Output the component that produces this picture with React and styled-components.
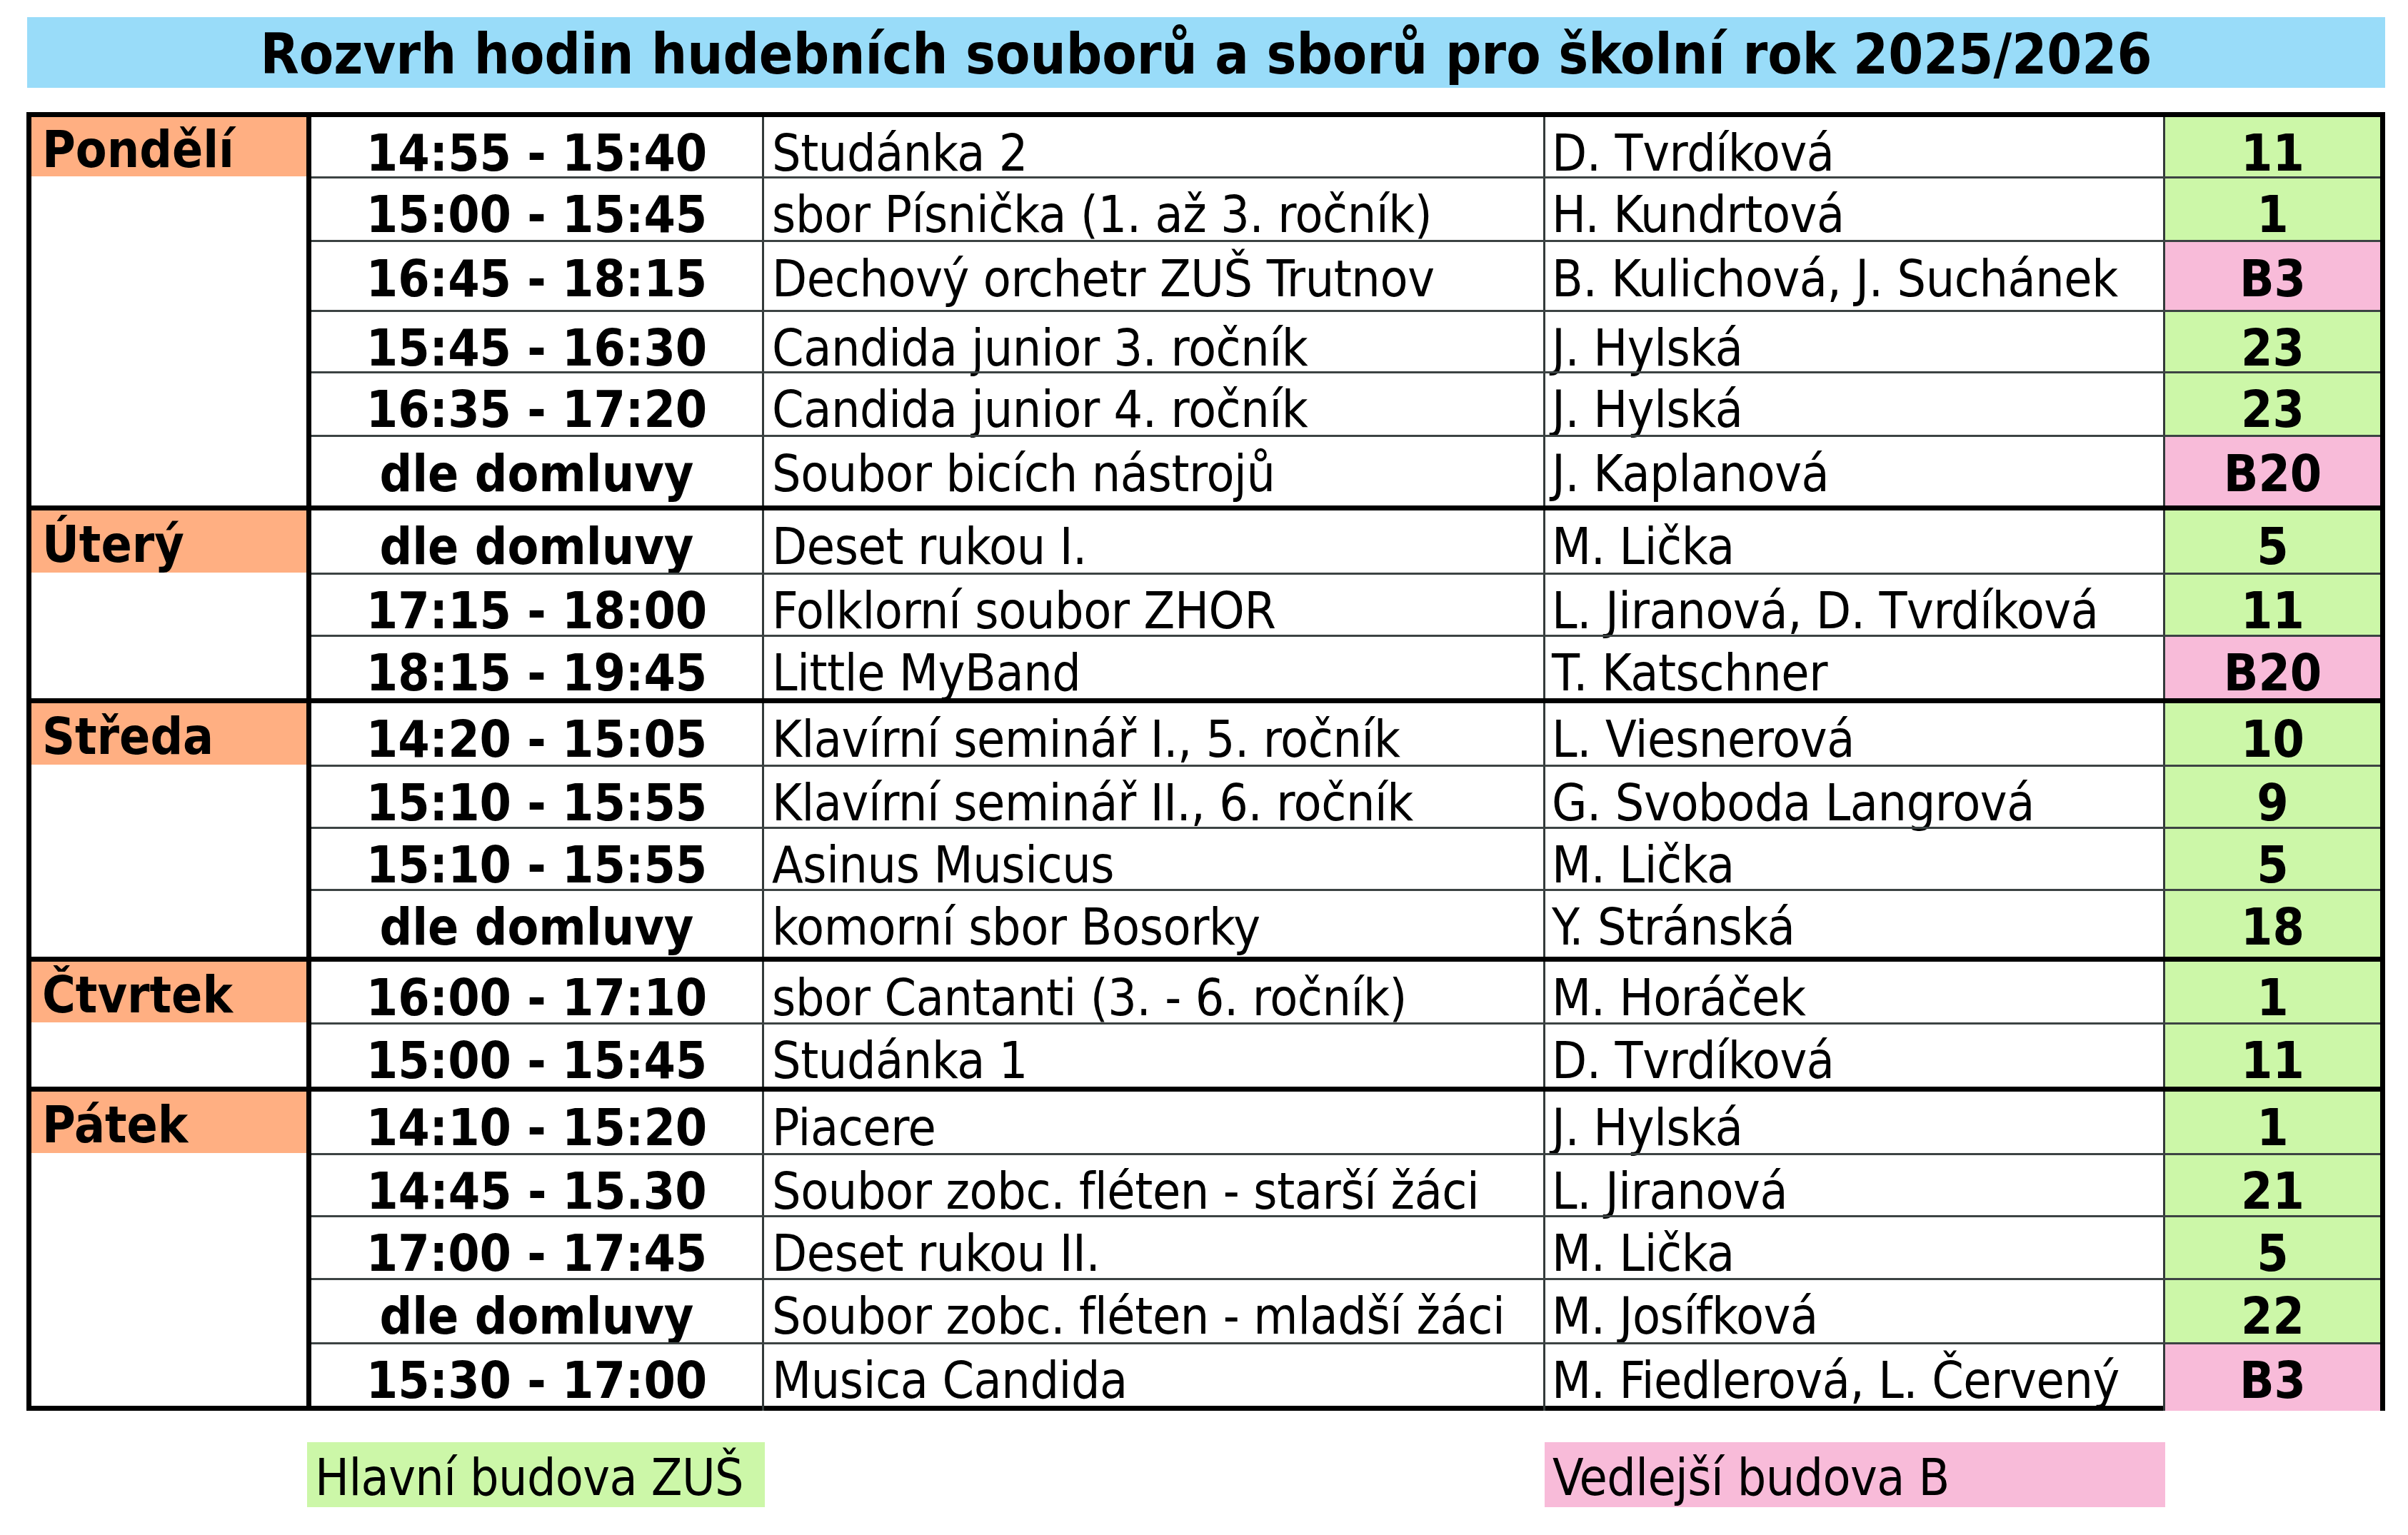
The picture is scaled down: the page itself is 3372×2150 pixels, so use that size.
import React from 'react';
import styled, { createGlobalStyle } from 'styled-components';

const GlobalStyle = createGlobalStyle`
  html, body {
    margin: 0;
    padding: 0;
    background: #ffffff;
  }
  body {
    font-family: 'DejaVu Sans Condensed', 'DejaVu Sans', sans-serif;
    font-stretch: condensed;
    color: #000000;
  }
`;

// barvy podle budov
const ROOM_BG = {
  main: '#ccf7a8',
  side: '#f8bbd9',
};

// h = vzdálenost mezi středy čar (jako v tabulce z Excelu)
const schedule = [
  {
    day: 'Pondělí',
    rows: [
      { h: 88, time: '14:55 - 15:40', name: 'Studánka 2', teacher: 'D. Tvrdíková', room: '11', b: 'main' },
      { h: 89, time: '15:00 - 15:45', name: 'sbor Písnička (1. až 3. ročník)', teacher: 'H. Kundrtová', room: '1', b: 'main' },
      { h: 98, time: '16:45 - 18:15', name: 'Dechový orchetr ZUŠ Trutnov', teacher: 'B. Kulichová, J. Suchánek', room: 'B3', b: 'side' },
      { h: 86, time: '15:45 - 16:30', name: 'Candida junior 3. ročník', teacher: 'J. Hylská', room: '23', b: 'main' },
      { h: 89, time: '16:35 - 17:20', name: 'Candida junior 4. ročník', teacher: 'J. Hylská', room: '23', b: 'main' },
      { h: 101, time: 'dle domluvy', name: 'Soubor bicích nástrojů', teacher: 'J. Kaplanová', room: 'B20', b: 'side' },
    ],
  },
  {
    day: 'Úterý',
    rows: [
      { h: 92, time: 'dle domluvy', name: 'Deset rukou I.', teacher: 'M. Lička', room: '5', b: 'main' },
      { h: 87, time: '17:15 - 18:00', name: 'Folklorní soubor ZHOR', teacher: 'L. Jiranová, D. Tvrdíková', room: '11', b: 'main' },
      { h: 91, time: '18:15 - 19:45', name: 'Little MyBand', teacher: 'T. Katschner', room: 'B20', b: 'side' },
    ],
  },
  {
    day: 'Středa',
    rows: [
      { h: 91, time: '14:20 - 15:05', name: 'Klavírní seminář I., 5. ročník', teacher: 'L. Viesnerová', room: '10', b: 'main' },
      { h: 87, time: '15:10 - 15:55', name: 'Klavírní seminář II., 6. ročník', teacher: 'G. Svoboda Langrová', room: '9', b: 'main' },
      { h: 87, time: '15:10 - 15:55', name: 'Asinus Musicus', teacher: 'M. Lička', room: '5', b: 'main' },
      { h: 97, time: 'dle domluvy', name: 'komorní sbor Bosorky', teacher: 'Y. Stránská', room: '18', b: 'main' },
    ],
  },
  {
    day: 'Čtvrtek',
    rows: [
      { h: 90, time: '16:00 - 17:10', name: 'sbor Cantanti (3. - 6. ročník)', teacher: 'M. Horáček', room: '1', b: 'main' },
      { h: 92, time: '15:00 - 15:45', name: 'Studánka 1', teacher: 'D. Tvrdíková', room: '11', b: 'main' },
    ],
  },
  {
    day: 'Pátek',
    rows: [
      { h: 91, time: '14:10 - 15:20', name: 'Piacere', teacher: 'J. Hylská', room: '1', b: 'main' },
      { h: 87, time: '14:45 - 15.30', name: 'Soubor zobc. fléten - starší žáci', teacher: 'L. Jiranová', room: '21', b: 'main' },
      { h: 88, time: '17:00 - 17:45', name: 'Deset rukou II.', teacher: 'M. Lička', room: '5', b: 'main' },
      { h: 90, time: 'dle domluvy', name: 'Soubor zobc. fléten - mladší žáci', teacher: 'M. Josífková', room: '22', b: 'main' },
      { h: 91, time: '15:30 - 17:00', name: 'Musica Candida', teacher: 'M. Fiedlerová, L. Červený', room: 'B3', b: 'side' },
    ],
  },
];

const THICK = 7;
const THIN = 3;

// výška řádku bez poloviny silných čar
const rowHeight = (h, first, last) => {
  if (first) return h - THICK / 2 - (last ? THICK / 2 : THIN / 2);
  return h + THIN / 2 - (last ? THICK / 2 : THIN / 2);
};

const Page = styled.div`
  width: 3372px;
  height: 2150px;
  box-sizing: border-box;
  padding: 24px 32px 0 37px;
  overflow: hidden;
`;

const TitleBar = styled.h1`
  margin: 0 0 0 1px;
  height: 99px;
  background: #99dcf9;
  display: flex;
  align-items: center;
  justify-content: center;
  padding-top: 6px;
  box-sizing: border-box;
  font-size: 78.4px;
  font-weight: 700;
  line-height: 1;
  white-space: nowrap;
`;

const Table = styled.div`
  margin-top: 34px;
  border: ${THICK}px solid #000000;
  display: flex;
  flex-direction: column;
`;

const DayGroup = styled.div`
  display: grid;
  grid-template-columns: 385px ${THICK}px 1fr;
  border-top: ${p => (p.$first ? 'none' : `${THICK}px solid #000000`)};
`;

const DayCell = styled.div`
  display: flex;
  flex-direction: column;
`;

const DayLabel = styled.div`
  height: ${p => p.$h}px;
  background: #ffaf82;
  display: flex;
  align-items: center;
  padding: 8px 0 0 15px;
  box-sizing: border-box;
  font-size: 71px;
  font-weight: 700;
  line-height: 1.2;
`;

const ThickRule = styled.div`
  background: #000000;
`;

const Rows = styled.div`
  display: flex;
  flex-direction: column;
`;

const Row = styled.div`
  display: grid;
  grid-template-columns: 631px ${THIN}px 1091px ${THIN}px 865px ${THIN}px 1fr;
  height: ${p => p.$h}px;
  box-sizing: border-box;
  border-top: ${p => (p.$first ? 'none' : `${THIN}px solid #3c4343`)};
  font-size: 71px;
  line-height: 1.2;
`;

const Cell = styled.div`
  display: flex;
  align-items: center;
  padding-top: 8px;
  box-sizing: border-box;
  white-space: nowrap;
  justify-content: ${p => (p.$center ? 'center' : 'flex-start')};
  padding-left: ${p => p.$pad || 0}px;
  font-weight: ${p => (p.$bold ? 700 : 400)};
  letter-spacing: ${p => (p.$bold ? 0 : -0.4)}px;
  background: ${p => p.$bg || 'transparent'};
`;

const ThinRule = styled.div`
  background: #333a3a;
`;

const Legend = styled.div`
  display: grid;
  grid-template-columns: 393px 641px 1092px 869px;
  margin-top: 44px;
`;

const LegendBox = styled.div`
  grid-column: ${p => p.$col};
  height: 91px;
  background: ${p => p.$bg};
  display: flex;
  align-items: center;
  padding: 8px 0 0 11px;
  box-sizing: border-box;
  font-size: 71px;
  letter-spacing: -0.6px;
  line-height: 1.2;
  white-space: nowrap;
`;

const App = () => (
  <>
    <GlobalStyle />
    <Page>
      <TitleBar>Rozvrh hodin hudebních souborů a sborů pro školní rok 2025/2026</TitleBar>
      <Table>
        {schedule.map((group, gi) => {
          const n = group.rows.length;
          return (
            <DayGroup key={group.day} $first={gi === 0}>
              <DayCell>
                <DayLabel $h={rowHeight(group.rows[0].h, true, n === 1)}>{group.day}</DayLabel>
              </DayCell>
              <ThickRule />
              <Rows>
                {group.rows.map((r, ri) => (
                  <Row key={ri} $h={rowHeight(r.h, ri === 0, ri === n - 1)} $first={ri === 0}>
                    <Cell $bold $center>{r.time}</Cell>
                    <ThinRule />
                    <Cell $pad={11}>{r.name}</Cell>
                    <ThinRule />
                    <Cell $pad={9}>{r.teacher}</Cell>
                    <ThinRule />
                    <Cell $bold $center $bg={ROOM_BG[r.b]}>{r.room}</Cell>
                  </Row>
                ))}
              </Rows>
            </DayGroup>
          );
        })}
      </Table>
      <Legend>
        <LegendBox $col={2} $bg={ROOM_BG.main}>Hlavní budova ZUŠ</LegendBox>
        <LegendBox $col={4} $bg={ROOM_BG.side}>Vedlejší budova B</LegendBox>
      </Legend>
    </Page>
  </>
);

export default App;
